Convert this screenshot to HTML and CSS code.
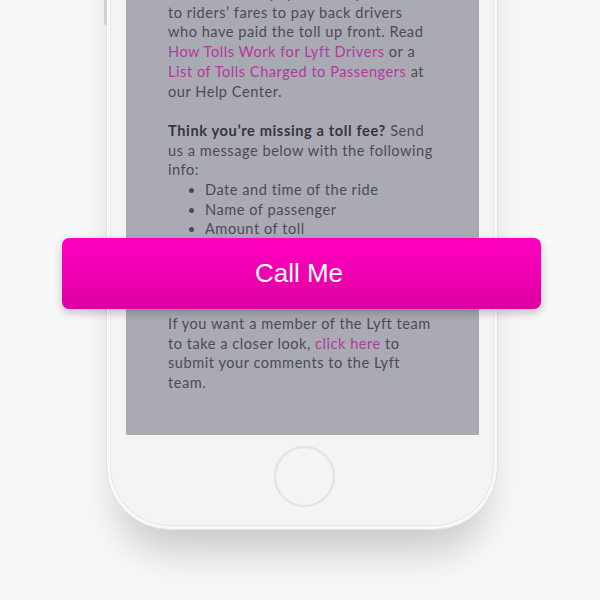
FILE: index.html
```html
<!DOCTYPE html>
<html>
<head>
<meta charset="utf-8">
<link rel="stylesheet" href="styles.css">
</head>
<body>
<div class="stage">
  <div class="phone">
    <span class="side-btn"></span>
    <div class="screen">
      <div class="content">
        <p>When a driver pays a toll, Lyft adds the toll,<br>to riders’ fares to pay back drivers<br>who have paid the toll up front. Read<br><a href="#">How Tolls Work for Lyft Drivers</a> or a<br><a href="#">List of Tolls Charged to Passengers</a> at<br>our Help Center.</p>
        <p class="lead"><b>Think you’re missing a toll fee?</b> Send<br>us a message below with the following<br>info:</p>
        <ul>
          <li>Date and time of the ride</li>
          <li>Name of passenger</li>
          <li>Amount of toll</li>
          <li>Toll location</li>
        </ul>
        <p class="closing">If you want a member of the Lyft team<br>to take a closer look, <a href="#">click here</a> to<br>submit your comments to the Lyft<br>team.</p>
      </div>
    </div>
    <div class="chin"><div class="home"></div></div>
  </div>
  <button class="call">Call Me</button>
</div>
</body>
</html>
```

FILE: styles.css
```css
html, body {
  margin: 0;
  padding: 0;
  background: #f8f8f8;
}
.stage {
  position: relative;
  width: 600px;
  height: 600px;
  overflow: hidden;
  background: #f8f8f8;
}
.phone {
  position: relative;
  margin-left: 106px;
  margin-top: -200px;
  width: 392px;
  box-sizing: border-box;
  background: #f4f4f4;
  border: 1px solid #e1e1e1;
  border-radius: 64px;
  box-shadow: inset 0 0 0 3px #f9f9f9, inset 0 0 0 4px #e6e6e6, 0 34px 42px -14px rgba(0,0,0,0.2);
  padding: 80px 18px 0 19px;
}
.side-btn {
  position: absolute;
  left: -3px;
  top: 120px;
  width: 3px;
  height: 104px;
  background: #d0d0d0;
  border-radius: 2px 0 0 2px;
}
.screen {
  height: 554px;
  background: #aaaab3;
  border-radius: 1px;
  overflow: hidden;
}
.content {
  padding: 102px 10px 0 42px;
  font-family: "Lato", "Open Sans", sans-serif;
  font-size: 14.6px;
  letter-spacing: 0.52px;
  line-height: 19.7px;
  color: #4a4a57;
}
.content p {
  margin: 0 0 19.7px 0;
  white-space: nowrap;
}
.content p.lead {
  margin-bottom: 0;
}
.content b {
  color: #35353f;
  font-weight: 700;
  letter-spacing: 0.62px;
}
.content a {
  color: #b2399e;
  text-decoration: none;
}
.content ul {
  margin: 0;
  padding-left: 37px;
}
.content p.closing {
  margin-top: 55px;
}
.chin {
  height: 94px;
  padding-top: 11px;
  box-sizing: border-box;
  display: flex;
  justify-content: center;
}
.home {
  width: 57px;
  height: 57px;
  margin-left: 3px;
  border-radius: 50%;
  border: 2px solid #e3e3e3;
  box-shadow: 0 0 1px rgba(0,0,0,0.08), inset 0 0 1px rgba(0,0,0,0.08);
}
.call {
  position: absolute;
  left: 62px;
  top: 238px;
  width: 479px;
  height: 71px;
  border: none;
  border-radius: 7px;
  background: linear-gradient(to bottom, #ff00c0, #de00a0);
  color: #ffffff;
  font-family: "Liberation Sans", Arial, sans-serif;
  font-size: 26px;
  box-shadow: 0 4px 10px rgba(0,0,0,0.22);
  padding: 0 5px 0 0;
}
```
